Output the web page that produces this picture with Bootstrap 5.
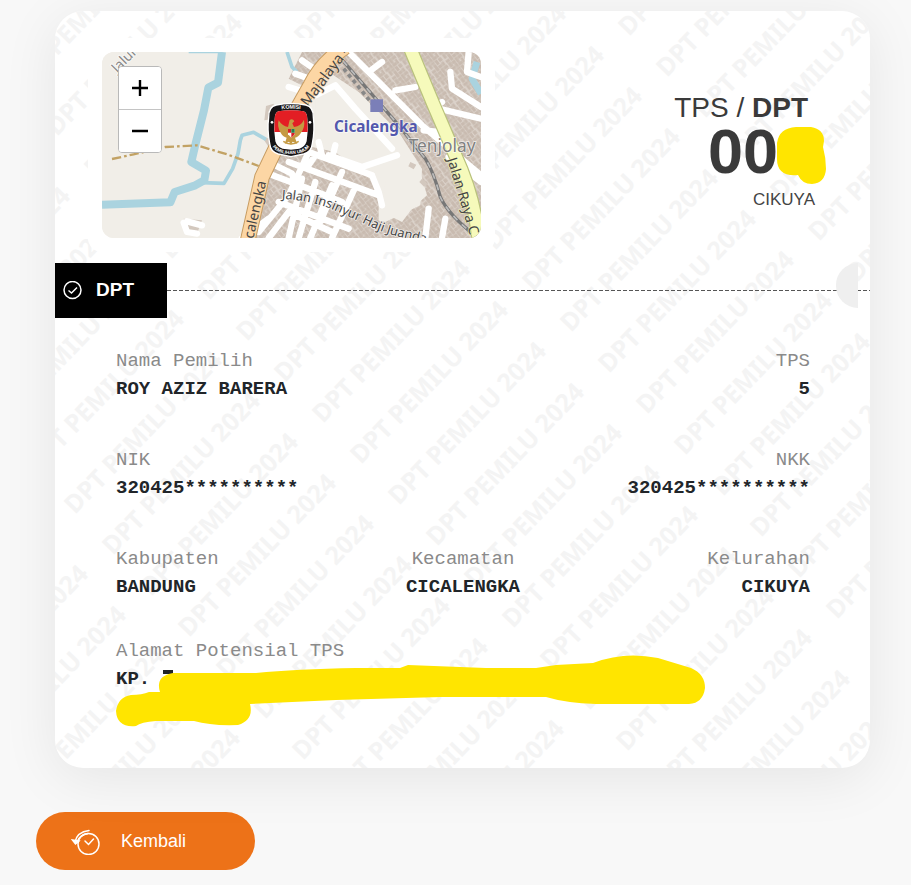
<!DOCTYPE html>
<html lang="id">
<head>
<meta charset="utf-8">
<meta name="viewport" content="width=device-width, initial-scale=1">
<title>DPT Pemilu 2024</title>
<link href="https://cdn.jsdelivr.net/npm/bootstrap@5.3.0/dist/css/bootstrap.min.css" rel="stylesheet">
<style>
body { background: #f8f8f8; font-family: "Liberation Sans", Arial, sans-serif; color: #3a3a3a; }
.page { padding: 11px 41px 16px 55px; }
.ticket { background: #fff; border: 0; border-radius: 28px; box-shadow: 0 10px 55px rgba(0,0,0,.08); overflow: hidden; }
.watermark { position: absolute; inset: 0; width: 100%; height: 100%; pointer-events: none; }
.watermark text { font: 700 25px "Noto Sans", sans-serif; fill: #f4f4f4; }
.ticket-head { padding: 27px 55px 11px 33px; }
.map-frame { background: #fff; padding: 14px; border-radius: 14px; }
.map-box { width: 379px; border-radius: 12px; overflow: hidden; background: #f1eee8; }
.map-box svg { display: block; width: 100%; height: auto; }
.map-zoom { position: absolute; top: 14px; left: 16px; width: 44px; border: 1px solid #b9b9b9; border-radius: 4px; overflow: hidden; background: #fff; }
.map-zoom button { height: 42px; border: 0; background: #fff; padding: 0; }
.map-zoom button + button { border-top: 1px solid #c4c4c4; height: 43px; }
.map-zoom svg { width: 18px; height: 18px; margin: auto; }
.tps-block { padding-top: 52px; }
.tps-title { font-size: 28px; line-height: 36px; padding-right: 7px; }
.tps-number { font-size: 63px; line-height: 50px; }
.tps-village { font-size: 17px; line-height: 24px; padding-top: 12px; color: #444; }
.hide-mark { position: absolute; overflow: visible; }
.hide-number { width: 50px; height: 58px; right: -12px; top: 0; }
.hide-address { width: 590px; height: 72px; left: 0; top: -10px; }
.hidden-digits { width: 37px; }
.status-tag { background: #000; color: #fff; width: 112px; height: 55px; font-size: 19px; padding-left: 8px; gap: 13px; }
.cut-line { height: 1px; background: repeating-linear-gradient(90deg, #555 0 4px, transparent 4px 6px); }
.notch { position: absolute; right: 12px; top: 0; width: 22px; height: 45px; background: #efefef; border-radius: 22px 0 0 22px; }
.voter { font-family: "Liberation Mono", "Courier New", monospace; font-size: 19px; line-height: 28px; padding: 29px 60px 47px 61px; color: #212529; }
.voter dl { margin: 0; }
.voter dt { font-weight: 400; color: #8a8a8a; }
.voter dd { font-weight: 700; margin: 0; }
.voter-row { margin-bottom: 43px; }
.voter-row.tight { margin-bottom: 36px; }
.address-text { min-height: 56px; }
.back-area { padding: 28px 36px 15px; }
.btn-back { background: #ed7218; color: #fff; border-radius: 29px; width: 219px; height: 58px; font-size: 18px; padding: 0 34px; gap: 20px; }
.btn-back:hover { background: #d96510; color: #fff; }
</style>
<script src="https://cdn.jsdelivr.net/npm/bootstrap@5.3.0/dist/js/bootstrap.bundle.min.js"></script>
</head>
<body>
<main>
<div class="page">
<section class="card ticket">
  <svg class="watermark" id="watermark" aria-hidden="true"></svg>

  <header class="ticket-head position-relative d-flex justify-content-between">
    <div class="map-frame">
      <div class="map-box position-relative">
        <svg viewBox="0 0 1137 558" role="img" aria-label="Peta lokasi TPS">
          <defs>
            <pattern id="houses" width="74" height="66" patternUnits="userSpaceOnUse" patternTransform="rotate(52) scale(.8)">
              <rect width="74" height="66" fill="#dcd3cb"/>
              <path fill="#c9bbb0" d="M1 3h16v11h-16zM19 0h12v17h-12zM33 4h20v9h-20zM56 1h15v14h-15zM3 16h13v15h-13zM18 19h22v11h-22zM41 14h12v17h-12zM55 18h19v11h-19zM0 33h19v11h-19zM21 32h12v15h-12zM34 33h17v10h-17zM53 31h9v16h-9zM64 32h10v13h-10zM5 46h12v16h-12zM19 49h18v12h-18zM39 45h12v19h-12zM53 49h20v11h-20z"/>
            </pattern>
            <path id="road-insinyur" d="M539 440Q620 445 684 469L774 509Q850 548 914 559L1000 580"/>
            <path id="road-raya" d="M1035 322Q1068 425 1108 565"/>
          </defs>
          <rect width="1137" height="558" fill="#f1eee8"/>
          <!-- built-up blocks -->
          <path fill="url(#houses)" d="M700 0H1137V558H560L600 500L660 470L850 510L955 460L960 350L890 240L770 120L680 60ZM600 0H680L620 110L560 80Z"/>
          <path fill="url(#houses)" d="M430 558L480 470L500 330L560 270L700 300L830 400L830 558Z"/>
          <path fill="#f1eee8" d="M640 110L715 100L800 220L890 290L955 360L975 430L930 470L900 510L840 480L850 390L740 300L640 260Z"/>
          <path fill="#d3c8be" d="M492 162L515 155L520 200L487 205ZM480 255L505 260L500 285ZM245 500L300 505L285 545L250 525ZM925 330l18 8l-8 14l-16-9zM960 380l16 14l-10 10l-14-14z"/>
          <!-- rivers -->
          <g fill="none" stroke="#aad3df" stroke-linejoin="round">
            <path stroke-width="24" d="M0 458L205 451L218 420L280 400L307 385L312 356L268 330L282 270L306 175L319 107L348 92L360 0"/>
            <path stroke-width="8" d="M260 0H360"/>
            <path stroke-width="11" d="M300 392L366 394L392 350L408 305L415 265L420 250L455 241L492 262M555 0L570 45L585 60"/>
            <path stroke-width="20" d="M1125 30L1110 80L1137 125"/>
          </g>
          <!-- dashed boundary -->
          <path fill="none" stroke="#c2a264" stroke-width="7" stroke-dasharray="28 9 8 9" d="M30 321L95 307L190 285L285 280L375 307L470 342"/>
          <!-- small streets -->
          <g fill="none" stroke="#fff" stroke-width="19" stroke-linecap="round" stroke-linejoin="round">
            <path d="M470 540L560 430L620 300L810 370M500 365L620 410L720 450M560 330L830 430M600 380L560 558M640 390L590 558M690 400L625 558M760 405L690 558M810 370L830 420L840 460M500 558L560 480L690 540M530 450L740 530M680 310L780 345L885 310M420 558L500 500M640 310L620 340M720 360L650 520M520 340L570 365L590 430M650 270L660 310M700 280L690 320M245 512L255 540L285 545M255 508L300 520"/>
            <path d="M560 105L640 130L700 100L760 170L870 290M580 65L650 90M600 25L650 60M740 0L960 220L1137 370M880 115L940 105M1045 60L1050 110L1137 165M1010 170L1137 200M990 170L1020 150M1100 0L1095 60L1137 75M965 235L1040 243M980 470L970 558M1030 500L1020 558M1040 315L1137 390M800 60L840 30"/>
          </g>
          <!-- railway -->
          <path fill="none" stroke="#777" stroke-width="10" d="M700 0L890 220L970 320Q995 360 1015 435Q1040 490 1125 555"/>
          <path fill="none" stroke="#bbb" stroke-width="5" stroke-dasharray="18 18" d="M700 0L890 220L970 320Q995 360 1015 435Q1040 490 1125 555"/>
          <path fill="none" stroke="#888" stroke-width="11" stroke-dasharray="12 10" d="M725 50L815 160"/>
          <!-- main roads -->
          <path fill="none" stroke="#c79c62" stroke-width="47" d="M435 575L480 375L535 260L625 100Q660 30 730 -15"/>
          <path fill="none" stroke="#fcd6a4" stroke-width="41" d="M435 575L480 375L535 260L625 100Q660 30 730 -15"/>
          <path fill="none" stroke="#b9c27c" stroke-width="43" d="M925 -10Q990 150 1060 310Q1120 440 1130 570"/>
          <path fill="none" stroke="#f6fabb" stroke-width="36" d="M925 -10Q990 150 1060 310Q1120 440 1130 570"/>
          <rect x="805" y="142" width="38" height="38" fill="#7b7fb8"/>
          <!-- labels -->
          <g font-family="Noto Sans, sans-serif" fill="#444" stroke="#fff" stroke-opacity=".7" stroke-width="5" paint-order="stroke" font-size="42">
            <text transform="translate(45 64) rotate(-45)" fill="#888">Jalur</text>
            <text transform="translate(617 166) rotate(-53)" font-size="44" stroke="#fcd6a4">Majalaya - Cicalengka</text>
            <text transform="translate(451 572) rotate(-77)" stroke="#fcd6a4">icalengka</text>
            <text font-size="38"><textPath href="#road-insinyur">Jalan Insinyur Haji Juanda</textPath></text>
            <text stroke="#f6fabb"><textPath href="#road-raya">Jalan Raya C</textPath></text>
            <text x="696" y="240" font-size="46" font-weight="700" fill="#5358ad">Cicalengka</text>
            <text x="920" y="300" font-size="52" fill="#808080">Tenjolay</text>
          </g>
          <!-- location badge -->
          <g transform="translate(567 234)">
            <path fill="#161416" stroke="#fff" stroke-width="4" d="M-44 -75Q0 -84 44 -75Q68 -70 67 -38Q72 0 64 40Q62 65 38 72L0 80L-38 72Q-62 65 -64 40Q-72 0 -67 -38Q-68 -70 -44 -75Z"/>
            <path fill="#fff" d="M-38 -56Q0 -63 38 -56Q49 -52 49 -32Q53 0 47 34Q42 51 25 56L0 59L-25 56Q-42 51 -47 34Q-53 0 -49 -32Q-49 -52 -38 -56Z"/>
            <path fill="#e31e24" d="M-38 -56Q0 -63 38 -56Q49 -52 49 -32L50 6H-50L-49 -32Q-49 -52 -38 -56Z"/>
            <path fill="#c59a43" d="M-4 -30Q5 -36 10 -26L4 -20L9 -9Q30 -12 39 -31Q43 -7 29 10Q22 22 12 23L19 42L5 35L0 44L-6 35L-19 42L-13 23Q-25 20 -31 8Q-43 -10 -37 -29Q-27 -12 -9 -9Z"/>
            <path fill="#fff" d="M-9 -3H11V13L1 23L-9 13Z"/><path fill="#d71f28" d="M-9 -3H1V8H-9ZM1 8H11V13L1 23Z"/><path fill="#26804b" d="M1 -3H11V8H1Z"/>
            <path fill="none" stroke="#c59a43" stroke-width="4" d="M-23 34Q0 50 23 34"/>
            <path id="badge-top" fill="none" d="M-44 -60Q0 -68 44 -60"/><path id="badge-low" fill="none" d="M-62 30Q-56 62 -30 68Q0 76 30 68Q56 62 62 30"/>
            <g font-family="Liberation Sans, sans-serif" font-weight="700" font-size="16" fill="#fff"><text text-anchor="middle"><textPath href="#badge-top" startOffset="50%">KOMISI</textPath></text><text font-size="14" text-anchor="middle"><textPath href="#badge-low" startOffset="50%">PEMILIHAN UMUM</textPath></text></g>
            <circle cx="-57" cy="-23" r="4" fill="#fff"/><circle cx="57" cy="-23" r="4" fill="#fff"/>
          </g>
        </svg>
        <div class="map-zoom d-flex flex-column">
          <button type="button" aria-label="Perbesar"><svg viewBox="0 0 18 18"><path d="M9 1V17M1 9H17" stroke="#000" stroke-width="2.4"/></svg></button>
          <button type="button" aria-label="Perkecil"><svg viewBox="0 0 18 18"><path d="M1 9H17" stroke="#000" stroke-width="2.4"/></svg></button>
        </div>
      </div>
    </div>
    <div class="tps-block text-end">
      <div class="tps-title">TPS / <strong>DPT</strong></div>
      <div class="tps-number fw-bold position-relative d-flex justify-content-end">
        <span>00</span><span class="hidden-digits"></span>
        <svg class="hide-mark hide-number" viewBox="0 0 50 58" aria-hidden="true"><path fill="#ffe500" d="M19 1L34 1Q47 3 47 15L46 21Q49 32 49 43Q48 57 35 58Q25 58 21 49Q0 51 0 33V17Q2 2 19 1Z"/></svg>
      </div>
      <div class="tps-village">CIKUYA</div>
    </div>
  </header>

  <div class="position-relative d-flex align-items-center">
    <div class="status-tag d-flex align-items-center fw-bold">
      <svg width="20" height="20" viewBox="0 0 20 20" fill="none" stroke="#fff" stroke-width="1.5" aria-hidden="true"><circle cx="9.500" cy="9" r="8.500"/><path d="M5.500 9.500L8.500 12L14 6.500"/></svg>
      <span>DPT</span>
    </div>
    <div class="cut-line flex-grow-1"></div>
    <span class="notch"></span>
  </div>

  <div class="voter position-relative">
    <div class="voter-row d-flex justify-content-between">
      <dl><dt>Nama Pemilih</dt><dd>ROY AZIZ BARERA</dd></dl>
      <dl class="text-end"><dt>TPS</dt><dd>5</dd></dl>
    </div>
    <div class="voter-row d-flex justify-content-between">
      <dl><dt>NIK</dt><dd>320425**********</dd></dl>
      <dl class="text-end"><dt>NKK</dt><dd>320425**********</dd></dl>
    </div>
    <div class="voter-row tight row g-0">
      <dl class="col"><dt>Kabupaten</dt><dd>BANDUNG</dd></dl>
      <dl class="col text-center"><dt>Kecamatan</dt><dd>CICALENGKA</dd></dl>
      <dl class="col text-end"><dt>Kelurahan</dt><dd>CIKUYA</dd></dl>
    </div>
    <dl>
      <dt>Alamat Potensial TPS</dt>
      <dd class="address-text position-relative">KP.
        <svg class="hide-mark hide-address" viewBox="0 0 590 72" aria-hidden="true"><path fill="#212529" d="M47 15H57V19H47Z"/><path fill="#ffe500" d="M57 18H140Q180 14 240 13H284L292 10L370 13H420L440 10L477 8Q508 -4 542 3L575 13Q589 19 589 33Q587 48 573 49H480Q450 48 430 42H325L220 45L134 49Q138 65 122 70Q95 71 78 66H40Q25 67 20 71Q1 73 0 56Q2 42 15 40Q26 40 33 37H44Q39 21 57 18Z"/></svg>
      </dd>
    </dl>
  </div>
</section>
</div>

<div class="back-area">
  <button type="button" class="btn btn-back d-flex align-items-center">
    <svg width="30" height="28" viewBox="0 0 30 28" fill="none" stroke="#fff" stroke-width="1.500" stroke-linecap="round" aria-hidden="true"><circle cx="17.500" cy="17" r="10.500"/><path d="M14 14L17.500 17.500L22.500 12"/><path d="M4 15Q6 5 18 3.500"/><path d="M17 6.500Q9 8 6.500 14"/><path d="M1.500 13L4.500 17L8 14Z" fill="#fff"/></svg>
    <span>Kembali</span>
  </button>
</div>
</main>
<script>
// Fill the card with diagonal rows of the watermark phrase.
const mark = document.getElementById('watermark');
const area = mark.getBoundingClientRect();
for (let col = -8; col <= 8; col++) {
  for (let row = -30; row <= 30; row++) {
    const x = 382 + col * 172 + row * 38;
    const y = 536 - col * 173 + row * 41;
    if (x < -150 || x > area.width || y < 5 || y > area.height + 150) continue;
    const t = document.createElementNS('http://www.w3.org/2000/svg', 'text');
    t.setAttribute('transform', `translate(${x} ${y}) rotate(-46)`);
    t.textContent = 'DPT PEMILU 2024';
    mark.appendChild(t);
  }
}
</script>
</body>
</html>
